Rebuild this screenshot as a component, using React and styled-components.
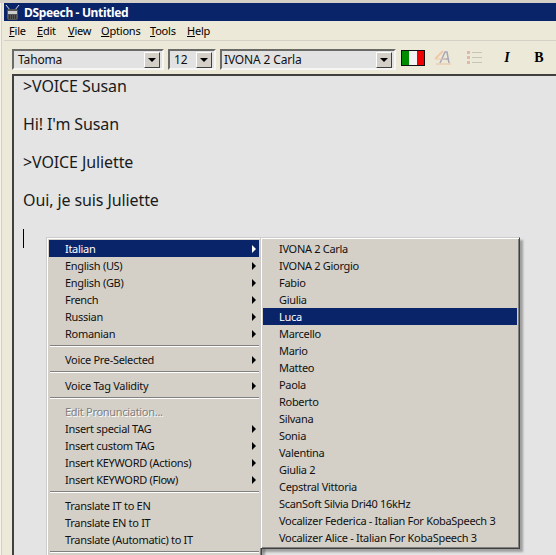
import React from 'react';
import styled, { createGlobalStyle } from 'styled-components';

const GlobalStyle = createGlobalStyle`
  html, body {
    margin: 0;
    padding: 0;
    background: #ece9d8;
  }
  * {
    box-sizing: border-box;
  }
`;

const uiFont = `"Noto Sans", "Liberation Sans", sans-serif`;

const Window = styled.div`
  position: relative;
  width: 556px;
  height: 555px;
  overflow: hidden;
  display: flex;
  flex-direction: column;
  padding: 3px 0 0 4px;
  background: #ece9d8;
  box-shadow: inset 0 3px 0 #d4d0c8, inset 1px 0 0 #f6f4ea, inset 2px 0 0 #d4d0c8;
  font-family: ${uiFont};
  font-size: 11px;
  color: #000;
`;

const TitleBar = styled.div`
  display: flex;
  align-items: center;
  gap: 3px;
  height: 18px;
  flex: none;
  background: #0a246a;
  color: #fff;
  font-weight: 700;
  font-size: 12px;
  letter-spacing: -0.35px;
`;

const MenuBar = styled.div`
  display: flex;
  align-items: center;
  height: 20px;
  flex: none;
  padding-left: 5px;
  border-bottom: 1px solid #d4d0c8;
`;

const MenuTitle = styled.span`
  width: ${(p) => p.$w}px;
  color: #000;
  letter-spacing: -0.2px;
`;

const Toolbar = styled.div`
  display: flex;
  align-items: flex-start;
  height: 33px;
  flex: none;
  padding: 8px 0 0 8px;
`;

const Select = styled.div`
  display: flex;
  align-items: center;
  justify-content: space-between;
  width: ${(p) => p.$w}px;
  height: 21px;
  margin-right: 4px;
  padding: 0 2px 0 ${(p) => p.$pad}px;
  background: #e2e2e2;
  border: 2px solid;
  border-color: #6a6a66 #f6f6f4 #f6f6f4 #6a6a66;
  font-size: 12px;
  letter-spacing: -0.15px;
  color: #111;
`;

const SelectArrow = styled.span`
  display: flex;
  align-items: center;
  justify-content: center;
  width: 16px;
  height: 16px;
  background: #d4d0c8;
  border: 1px solid;
  border-color: #fff #404040 #404040 #fff;

  &::after {
    content: '';
    border: 4px solid transparent;
    border-top-color: #000;
    border-bottom: 0;
  }
`;

const Flag = styled.div`
  display: flex;
  width: 24px;
  height: 16px;
  margin: 1px 2px 0 1px;
  border: 1px solid #111;
`;

const Stripe = styled.span`
  flex: 1;
  background: ${(p) => p.$c};
`;

const ToolIcons = styled.div`
  display: flex;
  align-items: center;
  height: 18px;
`;

const ToolSlot = styled.span`
  display: flex;
  justify-content: center;
  width: 32px;
  font-family: "Liberation Serif", serif;
  font-weight: 700;
  font-size: 14px;
  font-style: ${(p) => (p.$italic ? 'italic' : 'normal')};
`;

const EditorRow = styled.div`
  flex: 1;
  padding-left: 8px;
`;

const Editor = styled.div`
  height: 100%;
  padding: 1px 0 0 9px;
  background: #e4e4e4;
  border-top: 2px solid #404040;
  border-left: 2px solid #404040;
  font-size: 16px;
  line-height: 19px;
  letter-spacing: -0.1px;
  color: #1a1a1a;
`;

const Line = styled.div`
  height: 19px;
  margin-bottom: 19px;
  white-space: nowrap;
`;

const Caret = styled.div`
  width: 1px;
  height: 19px;
  background: #000;
`;

const Popup = styled.div`
  position: absolute;
  left: ${(p) => p.$left}px;
  top: ${(p) => p.$top}px;
  width: ${(p) => p.$w}px;
  padding: 2px;
  background: #d4d0c8;
  border: 1px solid;
  border-color: #ccc #404040 #404040 #ccc;
  box-shadow: inset 1px 1px 0 #fff, inset -1px -1px 0 #808080, 3px 3px 2px rgba(0, 0, 0, 0.3);
`;

const Item = styled.div`
  position: relative;
  height: 17px;
  line-height: 17px;
  padding-left: ${(p) => p.$pad}px;
  white-space: nowrap;
  letter-spacing: -0.3px;
  background: ${(p) => (p.$active ? '#0a246a' : 'transparent')};
  color: ${(p) => (p.$active ? '#fff' : p.$disabled ? '#808080' : '#111')};
  text-shadow: ${(p) => (p.$disabled ? '1px 1px 0 #fff' : 'none')};

  ${(p) =>
    p.$sub &&
    `&::after {
      content: '';
      position: absolute;
      right: 3px;
      top: 5px;
      border: 4px solid transparent;
      border-left-color: ${p.$active ? '#fff' : '#000'};
      border-right: 0;
    }`}
`;

const Separator = styled.div`
  height: 2px;
  margin: 3px 0 4px 1px;
  background: #808080;
  border-bottom: 1px solid #fff;
`;

function AppIcon() {
  return (
    <svg width="17" height="17" viewBox="0 0 17 17">
      <path d="M2 1l4 5M15 1l-4 5" stroke="#ddd" strokeWidth="1" />
      <rect x="3" y="5" width="11" height="11" rx="2" fill="#555" />
      <rect x="4" y="7" width="9" height="3" fill="#ccc" />
      <path d="M5 12h7M5 14h7" stroke="#111" strokeDasharray="1 1" />
    </svg>
  );
}

function FontColorIcon() {
  return (
    <svg width="18" height="16" viewBox="0 0 18 16">
      <path d="M1 9L9 1" stroke="#f0c8a8" strokeWidth="2" />
      <path d="M6 13L11 2h2l2 11M8 9h6" stroke="#a8a8b8" strokeWidth="1.5" fill="none" />
      <path d="M2 9h10" stroke="#f0c8a8" />
      <path d="M2 14h15" stroke="#e8c0a0" />
    </svg>
  );
}

function ListIcon() {
  return (
    <svg width="16" height="14" viewBox="0 0 16 14">
      <rect x="0" y="0" width="3" height="3" fill="#e0b8a8" />
      <rect x="0" y="5" width="3" height="3" fill="#e0b8a8" />
      <rect x="0" y="10" width="3" height="3" fill="#e0b8a8" />
      <path d="M5 1.5h10M5 6.5h10M5 11.5h10" stroke="#c8c4b4" />
    </svg>
  );
}

const mainMenu = [
  { label: 'Italian', sub: true, active: true },
  { label: 'English (US)', sub: true },
  { label: 'English (GB)', sub: true },
  { label: 'French', sub: true },
  { label: 'Russian', sub: true },
  { label: 'Romanian', sub: true },
  null,
  { label: 'Voice Pre-Selected', sub: true },
  null,
  { label: 'Voice Tag Validity', sub: true },
  null,
  { label: 'Edit Pronunciation...', disabled: true },
  { label: 'Insert special TAG', sub: true },
  { label: 'Insert custom TAG', sub: true },
  { label: 'Insert KEYWORD (Actions)', sub: true },
  { label: 'Insert KEYWORD (Flow)', sub: true },
  null,
  { label: 'Translate IT to EN' },
  { label: 'Translate EN to IT' },
  { label: 'Translate (Automatic) to IT' },
  null,
];

const voices = [
  'IVONA 2 Carla',
  'IVONA 2 Giorgio',
  'Fabio',
  'Giulia',
  'Luca',
  'Marcello',
  'Mario',
  'Matteo',
  'Paola',
  'Roberto',
  'Silvana',
  'Sonia',
  'Valentina',
  'Giulia 2',
  'Cepstral Vittoria',
  'ScanSoft Silvia Dri40 16kHz',
  'Vocalizer Federica - Italian For KobaSpeech 3',
  'Vocalizer Alice - Italian For KobaSpeech 3',
];

const menus = [
  ['File', 28],
  ['Edit', 31],
  ['View', 33],
  ['Options', 49],
  ['Tools', 37],
  ['Help', 30],
];

export default function App() {
  return (
    <>
      <GlobalStyle />
      <Window>
        <TitleBar>
          <AppIcon />
          DSpeech - Untitled
        </TitleBar>
        <MenuBar>
          {menus.map(([name, w]) => (
            <MenuTitle key={name} $w={w}>
              <u>{name[0]}</u>
              {name.slice(1)}
            </MenuTitle>
          ))}
        </MenuBar>
        <Toolbar>
          <Select $w={152} $pad={4}>
            Tahoma
            <SelectArrow />
          </Select>
          <Select $w={48} $pad={4}>
            12
            <SelectArrow />
          </Select>
          <Select $w={176} $pad={2}>
            IVONA 2 Carla
            <SelectArrow />
          </Select>
          <Flag>
            <Stripe $c="#008c00" />
            <Stripe $c="#f4f4f4" />
            <Stripe $c="#f00000" />
          </Flag>
          <ToolIcons>
            <ToolSlot>
              <FontColorIcon />
            </ToolSlot>
            <ToolSlot>
              <ListIcon />
            </ToolSlot>
            <ToolSlot $italic>I</ToolSlot>
            <ToolSlot>B</ToolSlot>
          </ToolIcons>
        </Toolbar>
        <EditorRow>
          <Editor>
            <Line>&gt;VOICE Susan</Line>
            <Line>Hi! I'm Susan</Line>
            <Line>&gt;VOICE Juliette</Line>
            <Line>Oui, je suis Juliette</Line>
            <Caret />
          </Editor>
        </EditorRow>
        <Popup $left={46} $top={237} $w={216}>
          {mainMenu.map((item, i) =>
            item ? (
              <Item key={i} $pad={16} $sub={item.sub} $active={item.active} $disabled={item.disabled}>
                {item.label}
              </Item>
            ) : (
              <Separator key={i} />
            )
          )}
        </Popup>
        <Popup $left={260} $top={237} $w={260}>
          {voices.map((name) => (
            <Item key={name} $pad={16} $active={name === 'Luca'}>
              {name}
            </Item>
          ))}
        </Popup>
      </Window>
    </>
  );
}
